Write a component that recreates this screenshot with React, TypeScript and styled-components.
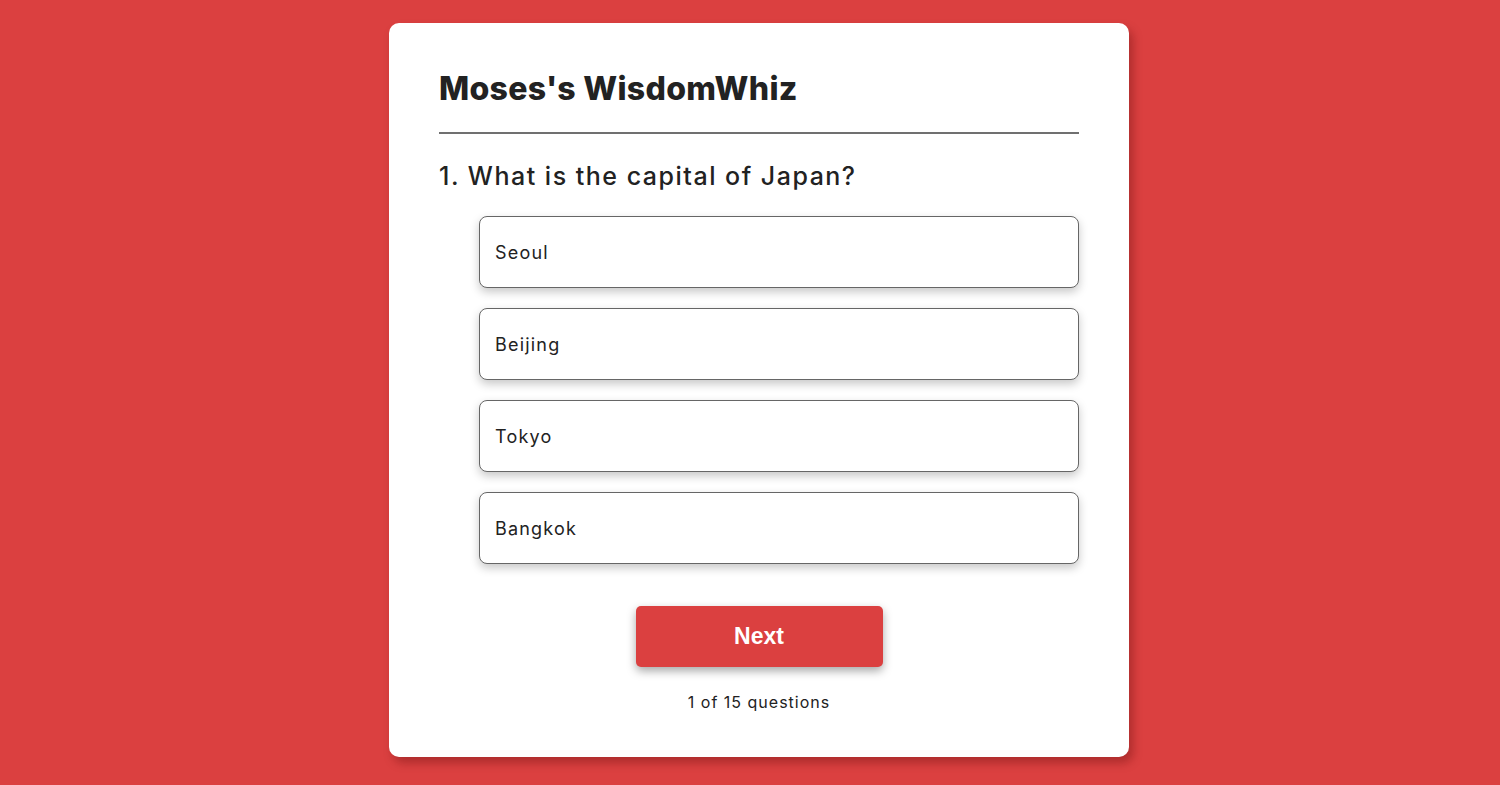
import React, { useState } from 'react';
import styled, { createGlobalStyle } from 'styled-components';

const GlobalStyle = createGlobalStyle`
  html, body {
    margin: 0;
    padding: 0;
    background: #db4040;
    font-family: Inter, "Open Sans", sans-serif;
    color: #222;
  }
`;

const Page = styled.div`
  min-height: 785px;
  display: flex;
  justify-content: center;
  align-items: flex-start;
  padding: 23px 0 0 18px;
  box-sizing: border-box;
`;

const Card = styled.div`
  width: 740px;
  box-sizing: border-box;
  background: #fff;
  border-radius: 10px;
  padding: 40px 50px 45px;
  box-shadow: 4px 6px 10px rgba(90, 10, 10, 0.35);
`;

const Title = styled.h1`
  margin: 0;
  padding: 6px 0 24px;
  font-size: 32px;
  font-weight: 800;
  letter-spacing: 0.3px;
  color: #222;
  border-bottom: 2px solid #707070;
`;

const Question = styled.h2`
  margin: 27px 0 25px;
  font-size: 25px;
  font-weight: 500;
  letter-spacing: 1.5px;
  color: #222;
`;

const Options = styled.ul`
  list-style: none;
  margin: 0 0 0 40px;
  padding: 0;
  display: flex;
  flex-direction: column;
  gap: 20px;
`;

const Option = styled.li<{ $selected: boolean }>`
  height: 72px;
  box-sizing: border-box;
  display: flex;
  align-items: center;
  padding: 0 15px;
  font-size: 18px;
  letter-spacing: 1.2px;
  border: 1px solid #666;
  border-radius: 8px;
  background: ${(p) => (p.$selected ? '#fdeaea' : '#fff')};
  box-shadow: 0 4px 10px rgba(0, 0, 0, 0.22);
  cursor: pointer;
`;

const Footer = styled.div`
  display: flex;
  flex-direction: column;
  align-items: center;
  padding-top: 42px;
`;

const NextButton = styled.button`
  width: 247px;
  height: 61px;
  background: #db4040;
  color: #fff;
  border: none;
  border-radius: 5px;
  font-family: "Liberation Sans", Arial, sans-serif;
  font-weight: 700;
  font-size: 23px;
  box-shadow: 0 4px 10px rgba(0, 0, 0, 0.35);
  cursor: pointer;
`;

const Counter = styled.p`
  margin: 25px 0 0;
  font-size: 16px;
  letter-spacing: 1px;
  color: #222;
`;

const answers = ['Seoul', 'Beijing', 'Tokyo', 'Bangkok'];

export default function App() {
  const [selected, setSelected] = useState<number | null>(null);

  return (
    <>
      <GlobalStyle />
      <Page>
        <Card>
          <Title>Moses's WisdomWhiz</Title>
          <Question>1. What is the capital of Japan?</Question>
          <Options>
            {answers.map((a, i) => (
              <Option key={a} $selected={selected === i} onClick={() => setSelected(i)}>
                {a}
              </Option>
            ))}
          </Options>
          <Footer>
            <NextButton>Next</NextButton>
            <Counter>1 of 15 questions</Counter>
          </Footer>
        </Card>
      </Page>
    </>
  );
}
